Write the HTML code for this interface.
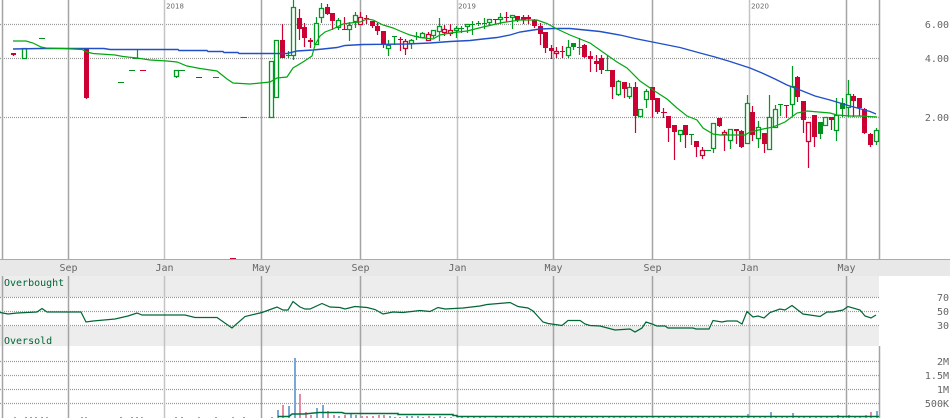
<!DOCTYPE html>
<html><head><meta charset="utf-8"><style>
html,body{margin:0;padding:0;background:#fff;width:950px;height:418px;overflow:hidden}
svg{display:block}
text{font-family:"DejaVu Sans Mono","Liberation Mono",monospace;font-size:10px;fill:#666}
.y{text-anchor:end}
.x{text-anchor:middle}
.s{font-family:"DejaVu Sans",sans-serif;font-size:7px;fill:#666;text-anchor:middle}
.l{fill:#006633}
</style></head><body>
<svg width="950" height="418" viewBox="0 0 950 418" xmlns="http://www.w3.org/2000/svg">
<rect width="950" height="418" fill="#fff"/>
<g shape-rendering="crispEdges">
<rect x="0" y="259" width="950" height="17" fill="#e8e8e8"/>
<rect x="0" y="259" width="950" height="1" fill="#aaa"/>
<rect x="0" y="276" width="879" height="21" fill="#ededed"/>
<rect x="0" y="326" width="879" height="20" fill="#ededed"/>
</g>
<path d="M0 24.5H879M0 58.5H879M0 117.5H879M0 297.5H879M0 311.5H879M0 325.5H879M0 361.5H879M0 375.5H879M0 389.5H879M0 403.5H879" stroke="#999" stroke-width="1.2" stroke-dasharray="1 1" fill="none"/>
<path d="M2.5 0V259M68.5 0V259M261.5 0V259M360.5 0V259M553.5 0V259M652.5 0V259M846.5 0V259M879.5 0V259M2.5 276V418M68.5 276V418M261.5 276V418M360.5 276V418M553.5 276V418M652.5 276V418M846.5 276V418M879.5 346V418" stroke="#a4a4a4" stroke-width="1.5" fill="none"/>
<path d="M164.5 0V259M457.5 0V259M749.5 0V259M164.5 276V418M457.5 276V418M749.5 276V418" stroke="#c4c4c4" stroke-width="1.5" fill="none"/>

<g shape-rendering="crispEdges">
<path stroke="#7ba7d7" stroke-width="2" fill="none" d="M26 417V418M31 417V418M36 417V418M42 417V418M82 417V418M121 417V418M132 417V418M137 417V418M176 417V418M182 417V418M216 417V418M244 417V418M272 417V418M278 410V418M289 406V418M295 358V418M317 408V418M323 405V418M339 416V418M351 413V418M356 415V418M390 416V418M395 417V418M407 416V418M412 416V418M418 416V418M423 417V418M434 417V418M440 416V418M445 417V418M462 416V418M468 416V418M474 416V418M480 416V418M496 416V418M502 416V418M530 416V418M558 416V418M564 416V418M570 416V418M581 416V418M592 416V418M603 416V418M625 416V418M636 416V418M664 416V418M681 416V418M698 416V418M720 416V418M748 414V418M771 412V418M793 413V418M810 416V418M827 416V418M838 415V418M849 415V418M877 411V418"/>
<path stroke="#e38ba3" stroke-width="2" fill="none" d="M15 417V418M47 417V418M86 417V418M142 417V418M199 417V418M233 417V418M283 405V418M300 394V418M306 412V418M311 415V418M328 411V418M334 415V418M345 415V418M362 416V418M367 416V418M373 416V418M379 415V418M384 415V418M400 417V418M429 416V418M451 417V418M485 417V418M508 417V418M513 417V418M519 417V418M524 417V418M536 417V418M541 417V418M547 417V418M575 417V418M586 417V418M597 417V418M609 417V418M614 417V418M620 417V418M631 417V418M642 417V418M647 417V418M653 417V418M659 417V418M670 417V418M675 417V418M687 417V418M692 417V418M703 417V418M709 417V418M714 417V418M725 417V418M731 417V418M737 417V418M742 417V418M754 417V418M760 417V418M765 417V418M776 417V418M782 417V418M787 417V418M799 417V418M804 417V418M816 417V418M821 417V418M832 417V418M843 417V418M855 417V418M860 417V418M866 415V418M871 412V418"/>
</g>
<path stroke="#00703c" stroke-width="1.5" fill="none" d="M278 416.5H289L292 414H304L319 412.5H342L345 413.5H398V414.5H453V415.5H457V416.5H879"/>

<polyline fill="none" stroke="#006633" stroke-width="1.2" points="0,312.5 8,314 17,313 37,312 42,308.5 47,312 81,312 86,322 93,321 115,319 128,316 137,313 142,315 185,315 195,317.5 217,317.5 232,328 245,316.5 262,312.5 277,307 283,310 288,310 293,301.5 300,307 305,309 310,309 322,303.5 330,307 340,307.5 345,309 355,306.5 367,307.5 375,309.5 383,314 393,312 403,312.5 420,310.5 430,311.5 438,307.5 445,309 463,308 480,306 487,304.5 510,302.5 518,306.5 528,308 533,311 543,322 548,323.5 562,325.5 568,320.5 580,320.5 585,324 590,325.5 600,326 615,330 630,329 635,332 642,328 646,322 652,324 657,326 665,326 668,328 693,328 696,329 709,329 713,320.5 722,322 727,321 737,321 742,324 747,311.5 753,317 758,316 764,318 770,312.5 780,309 785,310 792,305.5 803,314 820,316.5 827,312 833,312 843,310 848,306.5 860,310 865,316 871,318 876,315"/>

<path fill="none" stroke="#cc0033" stroke-width="1.2" d="M13.5 53V56M86.5 49V99M282.5 24V58M299.5 9V40M304.5 23V47M327.5 4V15M332.5 13V30M372.5 21V28M377.5 23V35M383.5 31V48M517.5 16V22M523.5 15V24M528.5 15V24M534.5 19V28M540.5 23V45M545.5 32V53M551.5 45V59M584.5 44V58M590.5 51V72M596.5 55V72M601.5 55V74M612.5 70V99M624.5 82V98M635.5 82V133M652.5 87V118M657.5 98V114M668.5 116V142M674.5 125V160M685.5 125V148M696.5 141V157M719.5 118V127M736.5 129V144M741.5 130V148M752.5 106V141M764.5 133V153M797.5 76V102M803.5 101V133M814.5 115V147M831.5 117V130M853.5 94V117M859.5 98V116M864.5 108V134M870.5 133V147M310.5 38V48M344.5 17V30M366.5 15V24M400.5 37V51M495.5 19V24M506.5 12V22M562.5 46V58M663.5 108V118M786.5 105V118M360.5 12V25M405.5 39V55M428.5 32V41M444.5 25V36M450.5 24V36M556.5 47V58M702.5 147V159M724.5 130V151M808.5 122V168"/>
<path fill="none" stroke="#009a20" stroke-width="1.2" d="M176.5 70V78M293.5 0V60M316.5 17V45M321.5 3V23M338.5 18V30M349.5 22V41M355.5 12V28M388.5 40V56M411.5 39V49M422.5 32V38M433.5 30V38M439.5 18V41M456.5 26V38M467.5 24V33M489.5 19V26M500.5 13V24M512.5 15V29M568.5 40V58M618.5 80V96M629.5 83V99M646.5 89V108M680.5 130V142M713.5 123V153M730.5 129V149M747.5 95V144M758.5 121V148M769.5 95V150M775.5 105V128M792.5 66V116M825.5 117V126M836.5 98V141M848.5 80V117M876.5 128V145M573.5 43V50M820.5 122V139M842.5 98V117M288.5 51V58M137.5 50V58M394.5 36V45M416.5 32V40M461.5 26V33M472.5 21V35M478.5 21V26M484.5 18V29M579.5 38V55M607.5 55V71M691.5 134V145M780.5 104V116"/>

<g shape-rendering="crispEdges">
<path fill="#cc0033" d="M11 53h5v2h-5zM84 49h5v49h-5zM280 40h5v18h-5zM297 18h5v11h-5zM302 27h5v11h-5zM325 7h5v7h-5zM330 13h5v8h-5zM370 21h5v5h-5zM375 26h5v5h-5zM381 31h5v14h-5zM515 16h5v4h-5zM521 17h5v3h-5zM526 17h5v2h-5zM532 20h5v6h-5zM538 26h5v8h-5zM543 32h5v16h-5zM549 48h5v3h-5zM582 45h5v12h-5zM588 56h5v3h-5zM594 61h5v3h-5zM599 58h5v12h-5zM610 70h5v17h-5zM622 82h5v7h-5zM633 87h5v29h-5zM650 87h5v13h-5zM655 98h5v14h-5zM666 116h5v12h-5zM672 125h5v7h-5zM683 125h5v10h-5zM694 141h5v6h-5zM717 118h5v8h-5zM734 129h5v2h-5zM739 131h5v16h-5zM750 112h5v23h-5zM762 133h5v11h-5zM795 77h5v20h-5zM801 101h5v19h-5zM812 115h5v22h-5zM829 117h5v3h-5zM851 96h5v5h-5zM857 98h5v10h-5zM862 109h5v24h-5zM868 134h5v11h-5zM308 40h5v2h-5zM342 29h5v1h-5zM364 18h5v1h-5zM398 39h5v1h-5zM493 19h5v1h-5zM504 17h5v1h-5zM560 51h5v1h-5zM661 112h6v1h-6zM784 105h5v1h-5zM140 70h6v1h-6zM196 77h6v1h-6zM230 258h6v1h-6z"/>
<path fill="#009020" d="M571 43h5v4h-5zM818 122h5v12h-5zM840 103h5v6h-5zM286 55h5v1h-5zM133 58h7v1h-7zM392 36h5v1h-5zM414 36h5v1h-5zM459 28h5v1h-5zM470 24h5v1h-5zM476 23h5v1h-5zM482 23h5v1h-5zM577 47h5v1h-5zM605 70h5v1h-5zM689 134h5v1h-5zM778 104h5v1h-5zM28 48h5v1h-5zM39 38h6v1h-6zM129 70h6v1h-6zM118 82h6v1h-6zM213 77h6v1h-6zM241 117h6v1h-6zM705 150h6v1h-6zM178 70h7v1h-7z"/>
</g>
<path fill="#fff" stroke="#cc0033" stroke-width="1.3" d="M358.5 17.5h4v7h-4zM403.5 41.5h4v7h-4zM426.5 34.5h4v6h-4zM442.5 29.5h4v3h-4zM448.5 30.5h4v3h-4zM554.5 51.5h4v2h-4zM700.5 150.5h4v5h-4zM722.5 132.5h4v2h-4zM806.5 122.5h4v19h-4z"/>
<path fill="#fff" stroke="#009a20" stroke-width="1.3" d="M22.5 48.5h4v10h-4zM174.5 70.5h4v6h-4zM269.5 61.5h4v56h-4zM274.5 40.5h4v57h-4zM291.5 7.5h4v48h-4zM314.5 23.5h4v21h-4zM319.5 8.5h4v9h-4zM336.5 20.5h4v7h-4zM347.5 25.5h4v4h-4zM353.5 15.5h4v6h-4zM386.5 45.5h4v3h-4zM409.5 40.5h4v3h-4zM420.5 33.5h4v4h-4zM431.5 30.5h4v5h-4zM437.5 26.5h4v5h-4zM454.5 28.5h4v2h-4zM465.5 24.5h4v2h-4zM487.5 19.5h4v3h-4zM498.5 17.5h4v2h-4zM510.5 15.5h4v2h-4zM566.5 47.5h4v8h-4zM616.5 81.5h4v13h-4zM627.5 87.5h4v9h-4zM638.5 109.5h4v7h-4zM644.5 91.5h4v8h-4zM678.5 130.5h4v4h-4zM711.5 123.5h4v25h-4zM728.5 129.5h4v11h-4zM745.5 103.5h4v40h-4zM756.5 127.5h4v11h-4zM767.5 117.5h4v32h-4zM773.5 109.5h4v18h-4zM790.5 86.5h4v18h-4zM823.5 117.5h4v8h-4zM834.5 115.5h4v15h-4zM846.5 94.5h4v13h-4zM874.5 130.5h4v11h-4z"/>

<polyline fill="none" stroke="#2050c8" stroke-width="1.4" points="13,49 40,48.5 104,48.5 110,49.5 178,49.5 179,50.5 207,50.5 208,51.5 223,51.5 224,52.5 238,52.5 239,53.5 287,53.5 297,51 313,50 323,49 337,47.5 345,45.5 363,44.5 407,44 430,43 450,41.5 470,40.5 483,39 497,37.5 510,35 520,32 530,30.5 540,29 553,28.5 570,28.5 580,29.5 590,30.5 600,31.5 620,35 635,38.5 650,41.5 665,44.5 680,47.5 700,53 715,57 730,61.5 750,68 762,73 775,79 787,85 800,90 815,96 830,100 850,106 870,111.5 876,114"/>
<polyline fill="none" stroke="#00a810" stroke-width="1.2" points="13,41 26,41 33,43 41,47 46,48 63,48.5 82,49.5 87,52 93,53.5 115,55 123,56.5 137,58 150,60 167,61 177,62 187,66 200,68.5 217,71 227,79 233,83 250,84 270,82 277,78 287,77 293,68 303,62 312,56 315,45 320,36 325,32 333,29 343,24 350,23 360,22 367,19 373,20 383,25 393,28 400,31 410,35 420,37.5 433,39 440,35 450,33 467,31 483,27 503,22.5 520,20 537,20 547,23.5 557,29 570,35 590,43 607,55 617,62 627,68 640,81 653,90 667,99 677,108 687,116 697,120 703,128 713,134 720,135 745,135 750,132 763,129 773,127 785,122 797,113 807,111 830,113 837,115 850,116 860,116 877,117"/>

<text class="s" x="175" y="8.5">2018</text>
<text class="s" x="467" y="8.5">2019</text>
<text class="s" x="760" y="8.5">2020</text>
<text class="y" x="949" y="28">6.00</text>
<text class="y" x="949" y="62">4.00</text>
<text class="y" x="949" y="121">2.00</text>
<text class="x" x="68.5" y="271">Sep</text>
<text class="x" x="164.5" y="271">Jan</text>
<text class="x" x="261.5" y="271">May</text>
<text class="x" x="360.5" y="271">Sep</text>
<text class="x" x="457.5" y="271">Jan</text>
<text class="x" x="553.5" y="271">May</text>
<text class="x" x="652.5" y="271">Sep</text>
<text class="x" x="749.5" y="271">Jan</text>
<text class="x" x="846.5" y="271">May</text>
<text class="l" x="4" y="286">Overbought</text>
<text class="l" x="4" y="344">Oversold</text>
<text class="y" x="949" y="301">70</text>
<text class="y" x="949" y="315">50</text>
<text class="y" x="949" y="329">30</text>
<text class="y" x="949" y="365">2M</text>
<text class="y" x="949" y="379">1.5M</text>
<text class="y" x="949" y="393">1M</text>
<text class="y" x="949" y="407">500K</text>
</svg>
</body></html>
